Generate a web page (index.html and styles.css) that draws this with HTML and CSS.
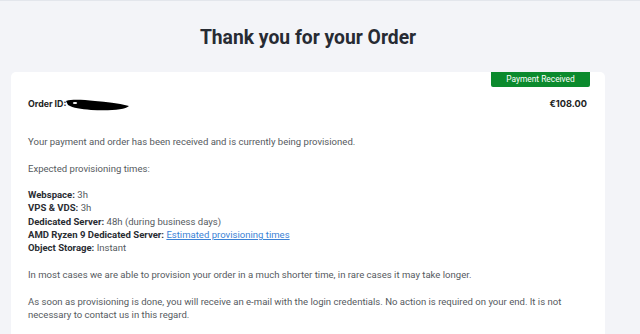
FILE: index.html
```html
<!DOCTYPE html>
<html lang="en">
<head>
<meta charset="utf-8">
<title>Thank you for your Order</title>
<link rel="stylesheet" href="styles.css">
</head>
<body>
<div class="page">
  <h1 class="title">Thank you for your Order</h1>
  <div class="card">
    <div class="badge">Payment Received</div>
    <div class="order-row">
      <div class="order-id">Order ID:<svg class="redact" width="66" height="14" viewBox="0 0 66 14"><path d="M1 3 C8 1 18 2 30 3 C42 4 52 5 64 8 C60 12 44 13 26 12 C16 11 8 10 3 7 Z" fill="#000"/><ellipse cx="10" cy="5" rx="2.2" ry="1.1" fill="#fff"/></svg></div>
      <div class="amount">€108.00</div>
    </div>
    <div class="body">
      <p>Your payment and order has been received and is currently being provisioned.</p>
      <p>Expected provisioning times:</p>
      <p><b>Webspace:</b> 3h<br><b>VPS &amp; VDS:</b> 3h<br><b>Dedicated Server:</b> 48h (during business days)<br><b>AMD Ryzen 9 Dedicated Server:</b> <a href="#">Estimated provisioning times</a><br><b>Object Storage:</b> Instant</p>
      <p>In most cases we are able to provision your order in a much shorter time, in rare cases it may take longer.</p>
      <p>As soon as provisioning is done, you will receive an e-mail with the login credentials. No action is required on your end. It is not necessary to contact us in this regard.</p>
    </div>
  </div>
</div>
</body>
</html>
```
FILE: styles.css
```css
html, body {
  margin: 0;
  padding: 0;
  background: #f3f4f8;
  font-family: Roboto, "Noto Sans", sans-serif;
  overflow: hidden;
}
.page {
  border-top: 1px solid #e3e6ec;
  padding: 0 35px 0 11px;
}
.title {
  margin: 24px 0 0;
  text-align: center;
  font-size: 19.3px;
  line-height: 26px;
  font-weight: 700;
  color: #272b33;
}
.card {
  margin-top: 21px;
  background: #fff;
  border-radius: 5px 5px 0 0;
  padding: 0 18px 20px 17px;
  position: relative;
}
.badge {
  position: absolute;
  top: 0;
  right: 15px;
  width: 99px;
  height: 15px;
  background: #0b8a2d;
  color: #fff;
  font-size: 8.4px;
  line-height: 15px;
  text-align: center;
  border-radius: 0 0 2px 2px;
}
.order-row {
  display: flex;
  justify-content: space-between;
  align-items: center;
  padding-top: 24px;
  height: 14px;
}
.order-id, .amount {
  font-family: Inter, Roboto, sans-serif;
  font-size: 8.8px;
  font-weight: 700;
  color: #222;
  display: flex;
  align-items: center;
}
.amount {
  font-size: 9.2px;
}
.redact {
  margin-left: -1px;
  margin-top: 3px;
}
.body {
  margin-top: 25px;
  font-size: 9.55px;
  line-height: 13.3px;
  color: #555a60;
}
.body p {
  margin: 0 0 13.3px;
}
.body b {
  color: #2a2d33;
  font-weight: 700;
}
.body a {
  color: #3b82d6;
  text-decoration: underline;
}
```
